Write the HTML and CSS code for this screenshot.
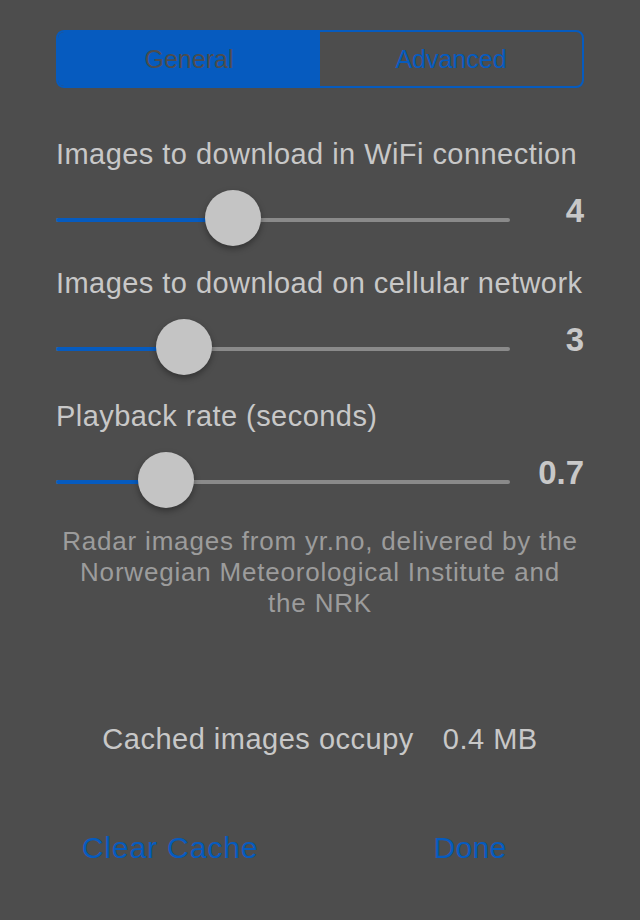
FILE: index.html
```html
<!DOCTYPE html>
<html lang="en">
<head>
    <meta charset="UTF-8">
    <meta name="viewport" content="width=device-width, initial-scale=1.0">
    <title>Radar Settings</title>
    <link rel="stylesheet" href="styles.css">
</head>
<body>
    <div class="screen">
        <div class="segmented">
            <button class="segment active">General</button>
            <button class="segment">Advanced</button>
        </div>

        <div class="setting">
            <div class="setting-label">Images to download in WiFi connection</div>
            <div class="slider-row">
                <div class="slider" style="--pos: 0.375">
                    <div class="track"></div>
                    <div class="fill"></div>
                    <div class="thumb"></div>
                </div>
                <div class="slider-value">4</div>
            </div>
        </div>

        <div class="setting setting-cell">
            <div class="setting-label">Images to download on cellular network</div>
            <div class="slider-row">
                <div class="slider" style="--pos: 0.25">
                    <div class="track"></div>
                    <div class="fill"></div>
                    <div class="thumb"></div>
                </div>
                <div class="slider-value">3</div>
            </div>
        </div>

        <div class="setting setting-rate">
            <div class="setting-label">Playback rate (seconds)</div>
            <div class="slider-row">
                <div class="slider" style="--pos: 0.205">
                    <div class="track"></div>
                    <div class="fill"></div>
                    <div class="thumb"></div>
                </div>
                <div class="slider-value">0.7</div>
            </div>
        </div>

        <p class="note">Radar images from yr.no, delivered by the<br>Norwegian Meteorological Institute and<br>the NRK</p>

        <div class="cache">
            <span>Cached images occupy</span>
            <span>0.4 MB</span>
        </div>

        <div class="actions">
            <button class="link-btn clear">Clear Cache</button>
            <button class="link-btn">Done</button>
        </div>
    </div>
</body>
</html>
```

FILE: styles.css
```css
body {
    margin: 0;
    background-color: #4d4d4d;
    font-family: "Liberation Sans", Arial, Helvetica, sans-serif;
    color: #c8c8c8;
}
.screen {
    padding: 30px 56px 0;
}
button {
    font-family: inherit;
    background: none;
    border: none;
    padding: 0;
    cursor: pointer;
}

/* segmented control */
.segmented {
    display: flex;
    height: 58px;
    box-sizing: border-box;
    border: 2px solid #065bbf;
    border-radius: 8px;
    overflow: hidden;
}
.segment {
    flex: 1;
    font-size: 25px;
    color: #065bbf;
}
.segment.active {
    background-color: #065bbf;
    color: #4d4d4d;
}

/* settings with sliders */
.setting {
    margin-top: 49px;
}
.setting-cell {
    margin-top: 20px;
}
.setting-rate {
    margin-top: 24px;
}
.setting-label {
    font-size: 29px;
    line-height: 34px;
    letter-spacing: 0.45px;
    white-space: nowrap;
}
.slider-row {
    display: flex;
    margin-top: 19px;
    height: 56px;
}
.slider {
    position: relative;
    width: 454px;
    height: 56px;
}
.track, .fill {
    position: absolute;
    top: 28px;
    left: 0;
    height: 4px;
    border-radius: 2px;
}
.track {
    width: 100%;
    background-color: #8a8a8a;
}
.fill {
    width: calc(28px + (100% - 56px) * var(--pos));
    background-color: #065bbf;
}
.thumb {
    position: absolute;
    top: 0;
    left: calc((100% - 56px) * var(--pos));
    width: 56px;
    height: 56px;
    border-radius: 50%;
    background-color: #c4c4c4;
    box-shadow: 0 3px 6px rgba(0, 0, 0, 0.35);
}
.slider-value {
    flex: 1;
    text-align: right;
    font-size: 33px;
    font-weight: bold;
    line-height: 42px;
}

/* footer */
.note {
    margin: 18px 0 0;
    font-size: 26px;
    line-height: 31px;
    letter-spacing: 0.8px;
    text-align: center;
    color: #9c9c9c;
}
.cache {
    display: flex;
    justify-content: center;
    gap: 29px;
    margin-top: 103px;
    font-size: 29px;
    line-height: 34px;
    letter-spacing: 0.5px;
}
.actions {
    display: grid;
    grid-template-columns: 1fr 1fr;
    margin: 74px -36px 0;
}
.link-btn {
    font-size: 30px;
    line-height: 36px;
    color: #065bbf;
    letter-spacing: 0.3px;
}
.link-btn.clear {
    letter-spacing: 0.9px;
}
```
